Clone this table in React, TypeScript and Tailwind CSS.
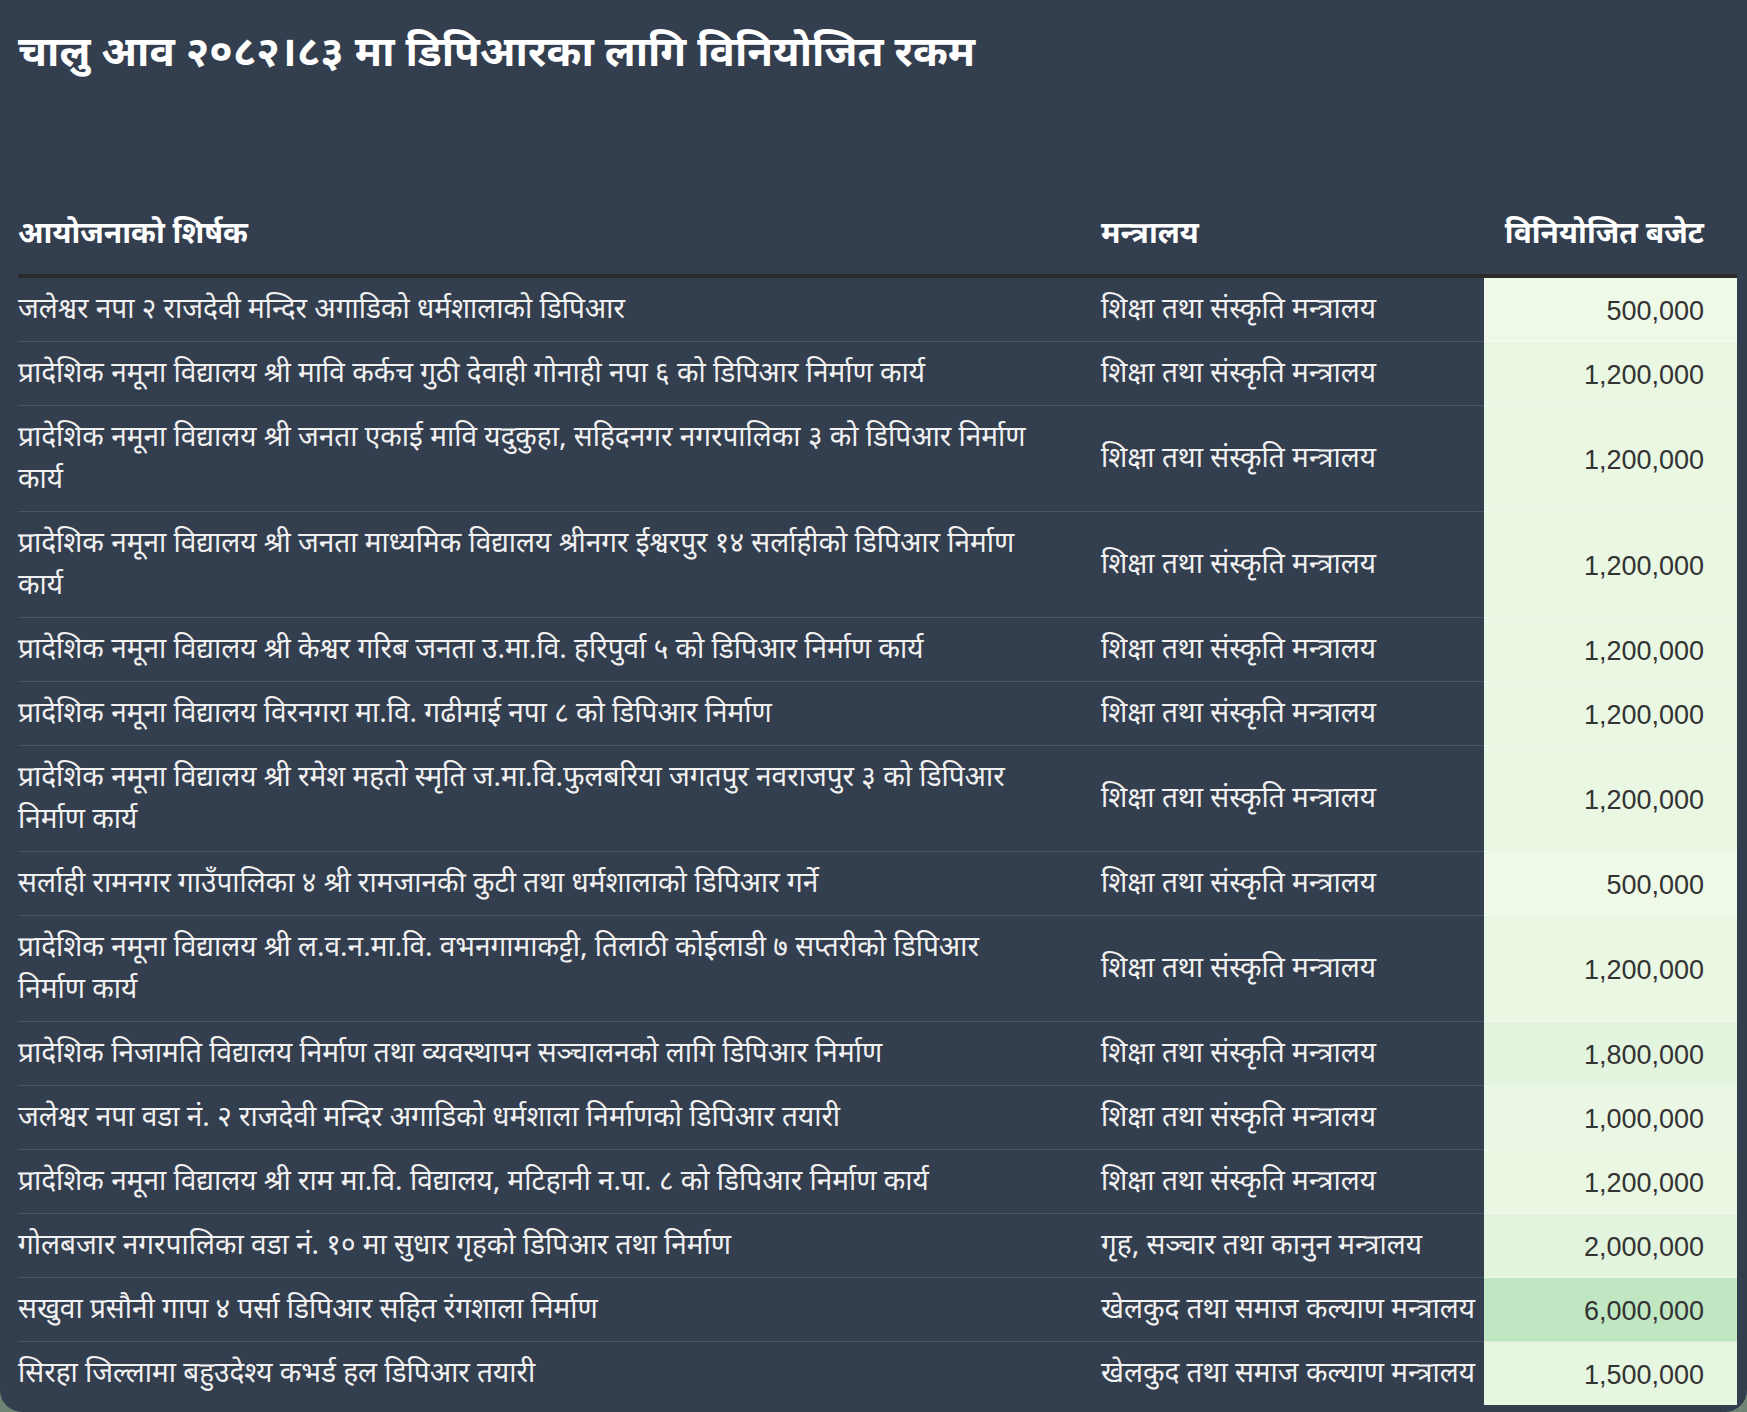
const ROWS: { title: string[]; ministry: string; amount: number }[] = [
  { title: ["जलेश्वर नपा २ राजदेवी मन्दिर अगाडिको धर्मशालाको डिपिआर"], ministry: "शिक्षा तथा संस्कृति मन्त्रालय", amount: 500000 },
  { title: ["प्रादेशिक नमूना विद्यालय श्री मावि कर्कच गुठी देवाही गोनाही नपा ६ को डिपिआर निर्माण कार्य"], ministry: "शिक्षा तथा संस्कृति मन्त्रालय", amount: 1200000 },
  {
    title: ["प्रादेशिक नमूना विद्यालय श्री जनता एकाई मावि यदुकुहा, सहिदनगर नगरपालिका ३ को डिपिआर निर्माण", "कार्य"],
    ministry: "शिक्षा तथा संस्कृति मन्त्रालय",
    amount: 1200000,
  },
  {
    title: ["प्रादेशिक नमूना विद्यालय श्री जनता माध्यमिक विद्यालय श्रीनगर ईश्वरपुर १४ सर्लाहीको डिपिआर निर्माण", "कार्य"],
    ministry: "शिक्षा तथा संस्कृति मन्त्रालय",
    amount: 1200000,
  },
  { title: ["प्रादेशिक नमूना विद्यालय श्री केश्वर गरिब जनता उ.मा.वि. हरिपुर्वा ५ को डिपिआर निर्माण कार्य"], ministry: "शिक्षा तथा संस्कृति मन्त्रालय", amount: 1200000 },
  { title: ["प्रादेशिक नमूना विद्यालय विरनगरा मा.वि. गढीमाई नपा ८ को डिपिआर निर्माण"], ministry: "शिक्षा तथा संस्कृति मन्त्रालय", amount: 1200000 },
  {
    title: ["प्रादेशिक नमूना विद्यालय श्री रमेश महतो स्मृति ज.मा.वि.फुलबरिया जगतपुर नवराजपुर ३ को डिपिआर", "निर्माण कार्य"],
    ministry: "शिक्षा तथा संस्कृति मन्त्रालय",
    amount: 1200000,
  },
  { title: ["सर्लाही रामनगर गाउँपालिका ४ श्री रामजानकी कुटी तथा धर्मशालाको डिपिआर गर्ने"], ministry: "शिक्षा तथा संस्कृति मन्त्रालय", amount: 500000 },
  {
    title: ["प्रादेशिक नमूना विद्यालय श्री ल.व.न.मा.वि. वभनगामाकट्टी, तिलाठी कोईलाडी ७ सप्तरीको डिपिआर", "निर्माण कार्य"],
    ministry: "शिक्षा तथा संस्कृति मन्त्रालय",
    amount: 1200000,
  },
  { title: ["प्रादेशिक निजामति विद्यालय निर्माण तथा व्यवस्थापन सञ्चालनको लागि डिपिआर निर्माण"], ministry: "शिक्षा तथा संस्कृति मन्त्रालय", amount: 1800000 },
  { title: ["जलेश्वर नपा वडा नं. २ राजदेवी मन्दिर अगाडिको धर्मशाला निर्माणको डिपिआर तयारी"], ministry: "शिक्षा तथा संस्कृति मन्त्रालय", amount: 1000000 },
  { title: ["प्रादेशिक नमूना विद्यालय श्री राम मा.वि. विद्यालय, मटिहानी न.पा. ८ को डिपिआर निर्माण कार्य"], ministry: "शिक्षा तथा संस्कृति मन्त्रालय", amount: 1200000 },
  { title: ["गोलबजार नगरपालिका वडा नं. १० मा सुधार गृहको डिपिआर तथा निर्माण"], ministry: "गृह, सञ्चार तथा कानुन मन्त्रालय", amount: 2000000 },
  { title: ["सखुवा प्रसौनी गापा ४ पर्सा डिपिआर सहित रंगशाला निर्माण"], ministry: "खेलकुद तथा समाज कल्याण मन्त्रालय", amount: 6000000 },
  { title: ["सिरहा जिल्लामा बहुउदेश्य कभर्ड हल डिपिआर तयारी"], ministry: "खेलकुद तथा समाज कल्याण मन्त्रालय", amount: 1500000 },
];

// light -> dark green scale for the budget cells
const LO = [239, 249, 232];
const HI = [192, 230, 194];

function cellColor(v: number) {
  const t = Math.min(1, Math.max(0, (v - 500000) / 5500000));
  const c = LO.map((a, i) => Math.round(a + (HI[i] - a) * t));
  return `rgb(${c[0]}, ${c[1]}, ${c[2]})`;
}

const deva = "font-['Noto_Sans_Devanagari','Lohit_Devanagari','Noto_Sans',sans-serif]";

export default function App() {
  return (
    <div className="min-h-[1412px] w-[1747px] bg-[#6e8475]">
      <div className={`min-h-[1412px] rounded-b-[22px] bg-[#333e4f] pl-[18px] pr-[10px] pt-[28px] ${deva}`}>
        <h1 className="text-[42px] font-bold leading-[56px] text-white">
          चालु आव २०८२।८३ मा डिपिआरका लागि विनियोजित रकम
        </h1>

        <div className="mt-[131px] grid grid-cols-[1083px_383px_253px] border-b-[4px] border-[#2b2b2b] pb-[17px] text-[30px] font-bold leading-[42px] text-white">
          <div>आयोजनाको शिर्षक</div>
          <div>मन्त्रालय</div>
          <div className="pr-[33px] text-right">विनियोजित बजेट</div>
        </div>

        {ROWS.map((r, i) => {
          const line = i < ROWS.length - 1 ? "border-b" : "border-b-0";
          return (
            <div key={i} className="grid grid-cols-[1083px_383px_253px] text-[28px] leading-[42px]">
              <div className={`${line} border-[#4a5465] pb-[9px] pt-[12px] pr-[20px] text-[#f1f1f1]`}>
                {r.title.map((t, j) => (
                  <div key={j} className="whitespace-nowrap">
                    {t}
                  </div>
                ))}
              </div>
              <div className={`${line} flex items-center whitespace-nowrap border-[#4a5465] pb-[9px] pt-[12px] text-[#f1f1f1]`}>
                {r.ministry}
              </div>
              <div
                className={`${line} flex items-center justify-end border-white/30 pb-[9px] pr-[33px] pt-[12px] font-['Liberation_Sans',Arial,sans-serif] text-[27px] text-[#333333]`}
                style={{ backgroundColor: cellColor(r.amount) }}
              >
                {r.amount.toLocaleString("en-US")}
              </div>
            </div>
          );
        })}
      </div>
    </div>
  );
}
